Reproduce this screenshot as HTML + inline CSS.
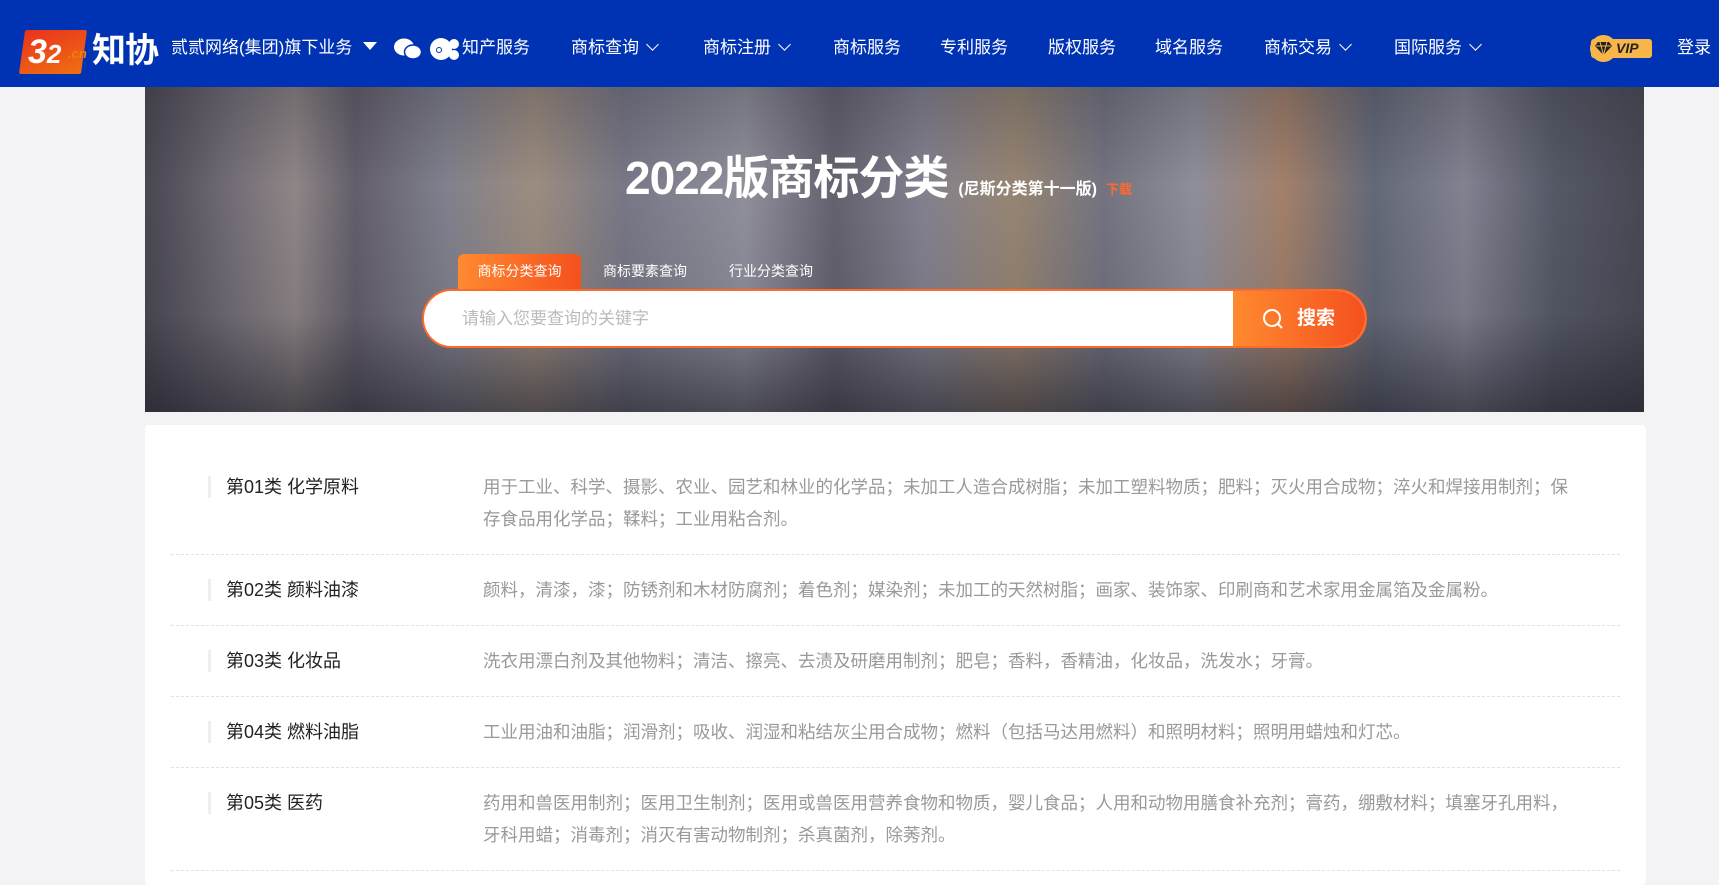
<!DOCTYPE html>
<html><head><meta charset="utf-8">
<style>
*{margin:0;padding:0;box-sizing:border-box}
body{width:1719px;height:849px;overflow:hidden;background:#f3f3f5;font-family:"Liberation Sans","Noto Sans CJK SC",sans-serif;position:relative}
.hd{position:absolute;left:0;top:0;width:1719px;height:87px;background:#0033b4;color:#fff}
.hd .it{position:absolute;top:36px;font-size:17px;line-height:24px;white-space:nowrap}
.chev{display:inline-block;width:9px;height:9px;border-right:1.5px solid #fff;border-bottom:1.5px solid #fff;transform:rotate(45deg);margin-left:9px;position:relative;top:-4px}
.banner{position:absolute;left:145px;top:87px;width:1499px;height:325px;overflow:hidden;
background:linear-gradient(90deg,#4c4a55 0%,#7d7680 6%,#9a9090 10%,#6a6570 14%,#8a8a98 20%,#aa9888 26%,#808090 32%,#9c9ca8 40%,#6c6876 46%,#8e8c9a 52%,#a4907a 58%,#7c7c8a 64%,#9a9aa6 70%,#b08a70 76%,#6a7080 82%,#8c8c9c 88%,#5a5e6c 94%,#4c4c58 100%)}
.banner:after{content:"";position:absolute;inset:0;background:linear-gradient(180deg,rgba(40,40,50,.35) 0%,rgba(40,40,50,.1) 30%,rgba(40,40,50,.2) 70%,rgba(30,30,40,.65) 100%)}
.bz{position:absolute;z-index:2}
.card{position:absolute;left:145px;top:425px;width:1501px;height:460px;background:#fff;border-radius:4px;padding-top:27px}
.row{margin:0 26px;border-bottom:1px dashed #e2e2e2;padding:19px 0;display:flex}
.t{width:312px;padding-left:55px;font-size:18px;line-height:32px;color:#222;position:relative}
.t:before{content:"";position:absolute;left:37px;top:5px;width:3px;height:22px;background:#eeeef2}
.d{width:1100px;font-size:17.5px;line-height:32px;color:#999}
</style></head><body>
<div class="hd">
  <div style="position:absolute;left:22px;top:30px;width:62px;height:44px;background:linear-gradient(160deg,#e8321e,#f07010);transform:skewX(-8deg);border-radius:2px"></div>
  <div style="position:absolute;left:28px;top:30px;font-size:34px;font-weight:bold;font-style:italic;color:#fff;line-height:44px">3<span style="font-size:26px">2</span></div>
  <div style="position:absolute;left:68px;top:46px;font-size:13px;font-style:italic;color:#f08010;font-weight:bold">.cn</div>
  <div style="position:absolute;left:92px;top:29px;font-size:34px;font-weight:bold;line-height:44px;letter-spacing:-1px">知协</div>
  <div class="it" style="left:171px">贰贰网络(集团)旗下业务 <span style="display:inline-block;border:7px solid transparent;border-top:8px solid #fff;vertical-align:-4px;margin-left:6px"></span></div>
  <svg style="position:absolute;left:394px;top:38px" width="28" height="22" viewBox="0 0 28 22"><ellipse cx="10" cy="9" rx="10" ry="8.5" fill="#fff"/><ellipse cx="19" cy="14" rx="8.5" ry="7" fill="#fff" stroke="#0033b4" stroke-width="1.5"/></svg>
  <svg style="position:absolute;left:430px;top:37px" width="30" height="24" viewBox="0 0 30 24"><circle cx="11" cy="12" r="11" fill="#fff"/><circle cx="24" cy="7" r="5" fill="#fff"/><circle cx="24" cy="18" r="5" fill="#fff"/><circle cx="9" cy="13" r="2.5" fill="none" stroke="#0033b4"/></svg>
  <div class="it" style="left:462px">知产服务</div>
  <div class="it" style="left:571px">商标查询<span class="chev"></span></div>
  <div class="it" style="left:703px">商标注册<span class="chev"></span></div>
  <div class="it" style="left:833px">商标服务</div>
  <div class="it" style="left:940px">专利服务</div>
  <div class="it" style="left:1048px">版权服务</div>
  <div class="it" style="left:1155px">域名服务</div>
  <div class="it" style="left:1264px">商标交易<span class="chev"></span></div>
  <div class="it" style="left:1394px">国际服务<span class="chev"></span></div>
  <div style="position:absolute;left:1591px;top:39px;width:61px;height:19px;background:#f8b54a;border-radius:3px;font-size:14px;font-weight:bold;font-style:italic;color:#222;line-height:19px;padding-left:25px">VIP</div>
  <div style="position:absolute;left:1590px;top:35px;width:27px;height:27px;border-radius:50%;background:#f8b54a"></div>
  <svg style="position:absolute;left:1595px;top:42px" width="17" height="13" viewBox="0 0 17 13"><path d="M3 0h11l3 4-8.5 9L0 4z" fill="#222"/><path d="M1 4h15M5 0l3.5 13M12 0L8.5 13" stroke="#f8b54a" stroke-width="1"/></svg>
  <div class="it" style="left:1677px">登录</div>
</div>
<div class="banner"></div>
<div class="bz" style="left:625px;top:150px;font-size:46px;font-weight:bold;color:#fff;white-space:nowrap;line-height:56px;letter-spacing:-1px">2022版商标分类<span style="font-size:16px;margin-left:10px;letter-spacing:0">(尼斯分类第十一版)</span><span style="font-size:13px;color:#ff6a2a;margin-left:9px;letter-spacing:0">下载</span></div>
<div class="bz" style="left:458px;top:254px;width:123px;height:36px;background:linear-gradient(90deg,#ff8a30,#f5501e);border-radius:6px 6px 0 0;color:#fff;font-size:14px;line-height:34px;text-align:center">商标分类查询</div>
<div class="bz" style="left:603px;top:254px;color:#fff;font-size:14px;line-height:34px">商标要素查询</div>
<div class="bz" style="left:729px;top:254px;color:#fff;font-size:14px;line-height:34px">行业分类查询</div>
<div class="bz" style="left:422px;top:289px;width:945px;height:59px;border:2px solid #ff6a2a;border-radius:30px;background:#fff;overflow:hidden">
  <div style="position:absolute;left:38px;top:0;line-height:55px;font-size:17px;color:#bbb">请输入您要查询的关键字</div>
  <div style="position:absolute;right:0;top:0;width:132px;height:55px;background:linear-gradient(90deg,#ff8a30,#f5501e);color:#fff;font-size:19px;font-weight:bold;line-height:55px;padding-left:64px">搜索</div>
  <svg style="position:absolute;left:838px;top:17px" width="22" height="22" viewBox="0 0 22 22"><circle cx="10" cy="10" r="8" fill="none" stroke="#fff" stroke-width="2"/><path d="M16 16l4 4" stroke="#fff" stroke-width="2"/></svg>
</div>
<div class="card">
  <div class="row"><div class="t">第01类 化学原料</div><div class="d">用于工业、科学、摄影、农业、园艺和林业的化学品；未加工人造合成树脂；未加工塑料物质；肥料；灭火用合成物；淬火和焊接用制剂；保存食品用化学品；鞣料；工业用粘合剂。</div></div>
  <div class="row"><div class="t">第02类 颜料油漆</div><div class="d">颜料，清漆，漆；防锈剂和木材防腐剂；着色剂；媒染剂；未加工的天然树脂；画家、装饰家、印刷商和艺术家用金属箔及金属粉。</div></div>
  <div class="row"><div class="t">第03类 化妆品</div><div class="d">洗衣用漂白剂及其他物料；清洁、擦亮、去渍及研磨用制剂；肥皂；香料，香精油，化妆品，洗发水；牙膏。</div></div>
  <div class="row"><div class="t">第04类 燃料油脂</div><div class="d">工业用油和油脂；润滑剂；吸收、润湿和粘结灰尘用合成物；燃料（包括马达用燃料）和照明材料；照明用蜡烛和灯芯。</div></div>
  <div class="row"><div class="t">第05类 医药</div><div class="d">药用和兽医用制剂；医用卫生制剂；医用或兽医用营养食物和物质，婴儿食品；人用和动物用膳食补充剂；膏药，绷敷材料；填塞牙孔用料，牙科用蜡；消毒剂；消灭有害动物制剂；杀真菌剂，除莠剂。</div></div>
</div>
</body></html>
